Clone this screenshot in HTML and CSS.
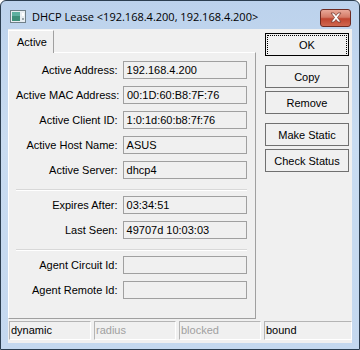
FILE: index.html
```html
<!DOCTYPE html>
<html lang="en">
<head>
    <meta charset="UTF-8">
    <title>DHCP Lease</title>
    <link rel="stylesheet" href="styles.css">
</head>
<body>

<div class="window">
    <div class="titlebar">
        <svg class="app-icon" width="16" height="13" viewBox="0 0 16 13">
            <rect x="0.5" y="0.5" width="15" height="12" fill="#e8eef2" stroke="#6f7f88"/>
            <rect x="2" y="2" width="8" height="9" fill="#3f8f7a"/>
            <rect x="2" y="2" width="8" height="4" fill="#5fb0a0"/>
            <rect x="12" y="3" width="2" height="3" fill="#ffffff"/>
            <rect x="12" y="8" width="2" height="2" fill="#9aa5ab"/>
        </svg>
        <span class="title">DHCP Lease &lt;192.168.4.200, 192.168.4.200&gt;</span>
        <div class="close-btn">
            <svg width="14" height="11" viewBox="0 0 14 11">
                <path d="M2 1 L5 1 L7 3.5 L9 1 L12 1 L8.5 5.5 L12 10 L9 10 L7 7.5 L5 10 L2 10 L5.5 5.5 Z" fill="#ffffff" stroke="#7a3a30" stroke-width="0.8"/>
            </svg>
        </div>
    </div>

    <div class="client">
        <div class="main">
            <div class="tab-area">
                <div class="tabs">
                    <div class="tab">Active</div>
                </div>
                <div class="panel">
                    <div class="field"><label>Active Address:</label><div class="box">192.168.4.200</div></div>
                    <div class="field"><label>Active MAC Address:</label><div class="box">00:1D:60:B8:7F:76</div></div>
                    <div class="field"><label>Active Client ID:</label><div class="box">1:0:1d:60:b8:7f:76</div></div>
                    <div class="field"><label>Active Host Name:</label><div class="box">ASUS</div></div>
                    <div class="field"><label>Active Server:</label><div class="box">dhcp4</div></div>
                    <div class="sep"></div>
                    <div class="field"><label>Expires After:</label><div class="box">03:34:51</div></div>
                    <div class="field"><label>Last Seen:</label><div class="box">49707d 10:03:03</div></div>
                    <div class="sep"></div>
                    <div class="field"><label>Agent Circuit Id:</label><div class="box"></div></div>
                    <div class="field"><label>Agent Remote Id:</label><div class="box"></div></div>
                </div>
            </div>
            <div class="buttons">
                <button class="btn default"><span>OK</span></button>
                <div class="btn-group">
                    <button class="btn">Copy</button>
                    <button class="btn">Remove</button>
                </div>
                <div class="btn-group">
                    <button class="btn">Make Static</button>
                    <button class="btn">Check Status</button>
                </div>
            </div>
        </div>
        <div class="statusbar">
            <div class="cell">dynamic</div>
            <div class="cell off">radius</div>
            <div class="cell off">blocked</div>
            <div class="cell">bound</div>
        </div>
    </div>
</div>

</body>
</html>
```

FILE: styles.css
```css
body {
    margin: 0;
    font-family: "Liberation Sans", Arial, sans-serif;
    font-size: 11px;
    color: #000;
}
.window {
    width: 360px;
    height: 350px;
    box-sizing: border-box;
    border: 1px solid #2c3e50;
    border-radius: 6px 6px 0 0;
    background: linear-gradient(to bottom, #bcd2ec 0%, #c9dcf1 40%, #c4d8ef 100%);
    display: flex;
    flex-direction: column;
}
.titlebar {
    height: 28px;
    display: flex;
    align-items: center;
    padding: 0 8px 0 9px;
}
.app-icon {
    margin-right: 6px;
    margin-top: 4px;
}
.title {
    font-family: "Open Sans", "Noto Sans", sans-serif;
    font-size: 11px;
    margin-top: 3px;
    flex: 1;
}
.close-btn {
    width: 29px;
    height: 16px;
    margin-top: 6px;
    border: 1px solid #6e2b22;
    border-radius: 3px;
    background: linear-gradient(to bottom, #e9a898 0%, #d47a66 45%, #c0452f 55%, #d0684f 100%);
    display: flex;
    align-items: center;
    justify-content: center;
}
.client {
    flex: 1;
    margin: 1px 7px 6px 7px;
    background: #f0f0f0;
    display: flex;
    flex-direction: column;
}
.main {
    display: flex;
    flex: 1;
}
.tab-area {
    width: 248px;
    display: flex;
    flex-direction: column;
}
.tabs {
    display: flex;
    height: 22px;
    padding-top: 1px;
}
.tab {
    width: 36px;
    padding: 5px 0 0 8px;
    border-left: 1px solid #ffffff;
    border-top: 1px solid #ffffff;
    border-right: 1px solid #a0a0a0;
    margin-bottom: -1px;
    background: #f0f0f0;
    position: relative;
    z-index: 1;
}
.panel {
    height: 267px;
    box-sizing: border-box;
    border-top: 1px solid #ffffff;
    border-left: 1px solid #ffffff;
    border-right: 1px solid #a0a0a0;
    border-bottom: 1px solid #a0a0a0;
    padding: 8px 8px 0 7px;
}
.field {
    display: flex;
    align-items: center;
    height: 18px;
    margin-bottom: 7px;
}
.field label {
    width: 102px;
    text-align: right;
    margin-right: 5px;
    white-space: nowrap;
}
.box {
    width: 120px;
    height: 16px;
    border: 1px solid #a0a0a0;
    background: #f0f0f0;
    padding-left: 3px;
    line-height: 16px;
}
.sep {
    height: 1px;
    background: #d8d8d8;
    border-bottom: 1px solid #ffffff;
    margin: 10px 0 5px 0;
}
.buttons {
    flex: 1;
    display: flex;
    flex-direction: column;
    padding: 4px 2px 0 9px;
}
.btn {
    height: 23px;
    width: 84px;
    border: 1px solid #707070;
    background: #f0f0f0;
    font-family: "Liberation Sans", Arial, sans-serif;
    font-size: 11px;
    padding: 0;
    margin-bottom: 3px;
}
.btn.default {
    border: 1px solid #000000;
    padding: 1px;
}
.btn.default span {
    display: block;
    height: 19px;
    line-height: 19px;
    border: 1px dotted #000000;
}
.btn-group {
    display: flex;
    flex-direction: column;
    margin-top: 6px;
}
.statusbar {
    display: grid;
    grid-template-columns: 82px 82px 82px 1fr;
    gap: 3px;
    height: 19px;
    margin: 2px 0 3px 1px;
}
.cell {
    border: 1px solid #b4b4b4;
    border-right-color: #ffffff;
    border-bottom-color: #ffffff;
    padding-left: 1px;
    line-height: 17px;
}
.cell.off {
    color: #a0a0a0;
}
```
